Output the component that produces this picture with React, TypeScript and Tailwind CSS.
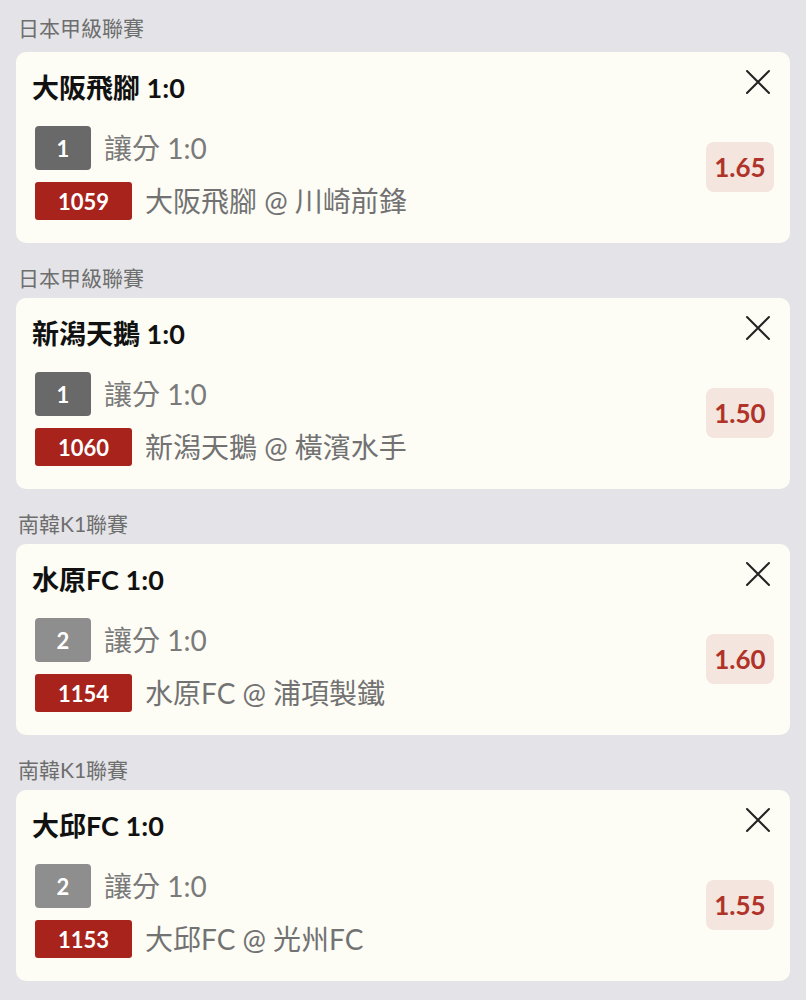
import React from 'react';

type Bet = {
  league: string;
  title: string;
  pick: string;
  pickTone: 'dark' | 'light';
  code: string;
  match: string;
  odds: string;
};

const bets: Bet[] = [
  { league: '日本甲級聯賽', title: '大阪飛腳 1:0', pick: '1', pickTone: 'dark', code: '1059', match: '大阪飛腳 @ 川崎前鋒', odds: '1.65' },
  { league: '日本甲級聯賽', title: '新潟天鵝 1:0', pick: '1', pickTone: 'dark', code: '1060', match: '新潟天鵝 @ 橫濱水手', odds: '1.50' },
  { league: '南韓K1聯賽', title: '水原FC 1:0', pick: '2', pickTone: 'light', code: '1154', match: '水原FC @ 浦項製鐵', odds: '1.60' },
  { league: '南韓K1聯賽', title: '大邱FC 1:0', pick: '2', pickTone: 'light', code: '1153', match: '大邱FC @ 光州FC', odds: '1.55' },
];

const CloseIcon: React.FC = () => (
  <svg width="32" height="32" viewBox="0 0 32 32" fill="none" stroke="#222" strokeWidth="2" strokeLinecap="round">
    <path d="M5 5 L27 27 M27 5 L5 27" />
  </svg>
);

const BetCard: React.FC<{ bet: Bet }> = ({ bet }) => (
  <div className="flex rounded-[10px] bg-[#fdfdf6] px-4">
    <div className="flex-1 pt-[18px] pb-[23px]">
      <div className="text-[27px] leading-[36px] font-bold text-[#111]">{bet.title}</div>
      <div className="mt-[20px] ml-[3px] flex h-[44px] items-center gap-[13px]">
        <span
          className={
            bet.pickTone === 'dark'
              ? 'flex h-[44px] w-[56px] items-center justify-center rounded-[4px] bg-[#696969] text-[22px] font-bold text-white'
              : 'flex h-[44px] w-[56px] items-center justify-center rounded-[4px] bg-[#8e8e8e] text-[22px] font-bold text-white'
          }
        >
          {bet.pick}
        </span>
        <span className="text-[28px] leading-none text-[#7a7a7a]">讓分 1:0</span>
      </div>
      <div className="mt-[12px] ml-[3px] flex h-[38px] items-center gap-[13px]">
        <span className="flex h-[38px] w-[97px] items-center justify-center rounded-[3px] bg-[#a8231c] text-[22px] font-bold text-white">
          {bet.code}
        </span>
        <span className="text-[28px] leading-none text-[#727272]">{bet.match}</span>
      </div>
    </div>
    <div className="flex flex-col items-end">
      <button className="mt-[14px] h-8 w-8">
        <CloseIcon />
      </button>
      <div className="mt-[44px] flex h-[50px] w-[68px] items-center justify-center rounded-[8px] bg-[#f4e5de] text-[26px] font-bold text-[#b0332a]">
        {bet.odds}
      </div>
    </div>
  </div>
);

export default function App() {
  return (
    <div
      className="min-h-screen bg-[#e4e4e8] px-4 pb-5"
      style={{ fontFamily: 'Lato, "Noto Sans CJK TC", sans-serif' }}
    >
      {bets.map((bet, i) => (
        <section key={i}>
          <div
            className={
              i === 0
                ? 'pl-[2px] pt-[14px] pb-[10px] text-[21px] leading-[28px] text-[#6e6e6e]'
                : 'pl-[2px] pt-[21px] pb-[6px] text-[21px] leading-[28px] text-[#6e6e6e]'
            }
          >
            {bet.league}
          </div>
          <BetCard bet={bet} />
        </section>
      ))}
    </div>
  );
}
